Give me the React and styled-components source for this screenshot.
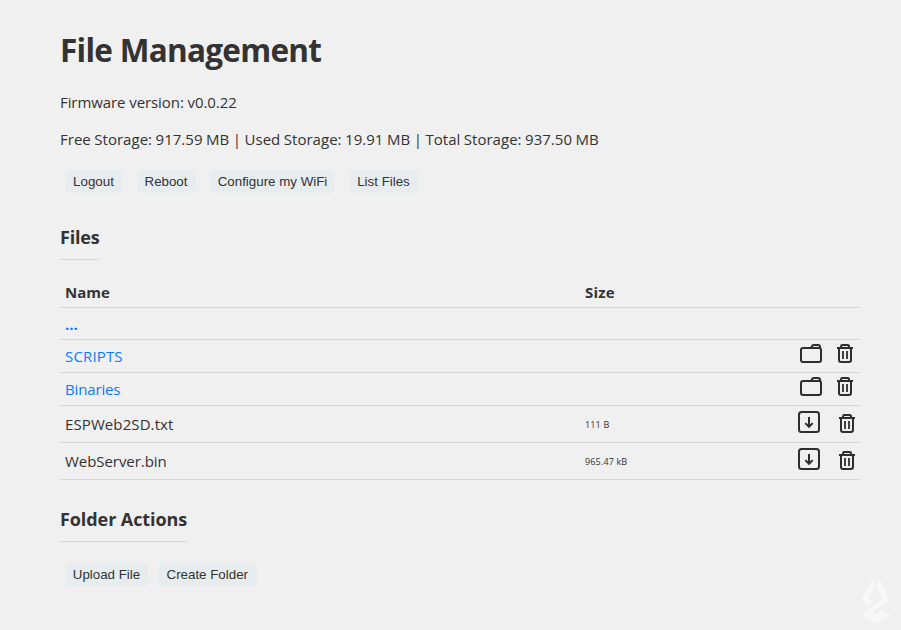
import React from "react";
import styled, { createGlobalStyle } from "styled-components";

const Global = createGlobalStyle`
  * { box-sizing: border-box; }
  body {
    margin: 0;
    background: #f0f0f0;
    color: #333;
    font-family: "Open Sans", "Noto Sans", sans-serif;
    font-size: 16px;
  }
`;

const Page = styled.main`
  position: relative;
  width: 901px;
  height: 630px;
  padding: 28px 41px 0 60px;
  overflow: hidden;
`;

const Title = styled.h1`
  margin: 0;
  font-size: 31.5px;
  line-height: 44px;
  font-weight: 700;
  white-space: nowrap;
  letter-spacing: -0.72px;
`;

const Info = styled.p`
  margin: ${(p) => p.$top} 0 0;
  font-size: 15px;
  line-height: 21px;
  white-space: nowrap;
  letter-spacing: ${(p) => p.$track || "0"};
  word-spacing: ${(p) => p.$words || "0"};
`;

const Toolbar = styled.div`
  display: flex;
  gap: ${(p) => p.$gap};
  margin-top: ${(p) => p.$top};
  padding-left: 5px;
`;

const Button = styled.button`
  width: ${(p) => p.$w}px;
  height: 23px;
  padding: 0;
  border: 0;
  border-radius: 4px;
  background: #e7ecef;
  color: #333;
  font: 13.333px/23px "Liberation Sans", Arial, sans-serif;
  white-space: nowrap;
`;

const Heading = styled.h3`
  width: ${(p) => p.$w}px;
  height: 36px;
  margin: ${(p) => p.$top} 0 0;
  border-bottom: 1px solid #d4d7d8;
  font-size: 18px;
  line-height: 26px;
  font-weight: 700;
  white-space: nowrap;
  letter-spacing: ${(p) => p.$track};
`;

const Table = styled.div`
  margin-top: 18px;
  width: 800px;
`;

const Row = styled.div`
  display: grid;
  grid-template-columns: 520px 213px 67px;
  height: ${(p) => p.$h}px;
  border-bottom: 1px solid #d4d7d8;
`;

const Cell = styled.div`
  padding: ${(p) => p.$top || "0"} 0 0 5px;
  font-size: 15px;
  line-height: 21px;
  white-space: nowrap;
  letter-spacing: ${(p) => p.$track || "0"};
`;

const HeadCell = styled(Cell)`
  font-weight: 700;
`;

const SizeCell = styled(Cell)`
  font-size: 9px;
  letter-spacing: 0.15px;
`;

const Link = styled.a`
  color: #087cff;
  text-decoration: none;
  font-weight: ${(p) => (p.$bold ? 700 : 400)};
`;

const Actions = styled.div`
  display: flex;
  align-items: flex-start;
  gap: ${(p) => p.$gap}px;
  padding: ${(p) => p.$top}px 0 0 ${(p) => p.$left}px;
`;

const Icon = styled.svg`
  display: block;
  flex: none;
  margin-top: ${(p) => p.$drop || 0}px;
  fill: none;
  stroke: #2e2e2e;
  stroke-width: 2;
`;

const Watermark = styled.svg`
  position: absolute;
  right: 10px;
  bottom: 6px;
  fill: #f8f8f8;
`;

const Folder = () => (
  <Icon width="22" height="19" viewBox="0 0 22 19">
    <rect x="1" y="4" width="20" height="14" rx="2" />
    <path d="M11.3 3.7C11.8 1.8 12.5 1 14 1H18.2C19.5 1 20.1 1.8 20.1 3.5V4.6" />
  </Icon>
);

const Trash = ({ drop }) => (
  <Icon width="16" height="19" viewBox="0 0 16 19" $drop={drop}>
    <path d="M0 4H16" />
    <path d="M4 4V2.4Q4 1 5.4 1H10.4Q12 1 12 2.4V4" />
    <path d="M2 4V16Q2 18 4 18H12Q14 18 14 16V4" />
    <path d="M6 7V15M10 7V15" strokeWidth="1.8" />
  </Icon>
);

const Download = () => (
  <Icon width="22" height="22" viewBox="0 0 22 22">
    <rect x="1" y="1" width="20" height="20" rx="2.5" />
    <path d="M11 6V16M7.3 12.1L11 15.8L14.7 12.1" />
  </Icon>
);

const entries = [
  { name: "SCRIPTS", h: 33, folder: true, track: "0.15px" },
  { name: "Binaries", h: 33, folder: true, track: "-0.15px" },
  { name: "ESPWeb2SD.txt", h: 37, size: "111 B", track: "0.1px" },
  { name: "WebServer.bin", h: 37, size: "965.47 kB", track: "-0.05px" },
];

export default function App() {
  return (
    <>
      <Global />
      <Page>
        <Title>File Management</Title>
        <Info $top="20px" $track="-0.08px">Firmware version: v0.0.22</Info>
        <Info $top="16px" $track="0.02px" $words="-0.4px">
          Free Storage: 917.59 MB | Used Storage: 19.91 MB | Total Storage: 937.50 MB
        </Info>
        <Toolbar $top="20px" $gap="14.5px">
          <Button $w={57}>Logout</Button>
          <Button $w={59}>Reboot</Button>
          <Button $w={125}>Configure my WiFi</Button>
          <Button $w={68}>List Files</Button>
        </Toolbar>
        <Heading $w={39} $top="31px" $track="-0.2px">Files</Heading>
        <Table>
          <Row $h={30}>
            <HeadCell $top="4px">Name</HeadCell>
            <HeadCell $top="4px" $track="0.2px">Size</HeadCell>
          </Row>
          <Row $h={32}>
            <Cell $top="6px"><Link $bold>...</Link></Cell>
          </Row>
          {entries.map((e) => (
            <Row key={e.name} $h={e.h}>
              <Cell $top={e.folder ? "6px" : "8px"} $track={e.track}>
                {e.folder ? <Link>{e.name}</Link> : e.name}
              </Cell>
              <SizeCell $top="8px">{e.size}</SizeCell>
              <Actions $top={e.folder ? 4 : 5} $left={e.folder ? 7 : 5} $gap={e.folder ? 15 : 19}>
                {e.folder ? <Folder /> : <Download />}
                <Trash drop={e.folder ? 0 : 3} />
              </Actions>
            </Row>
          ))}
        </Table>
        <Heading $w={127} $top="26px" $track="-0.08px">Folder Actions</Heading>
        <Toolbar $top="21px" $gap="10px">
          <Button $w={83}>Upload File</Button>
          <Button $w={98.5}>Create Folder</Button>
        </Toolbar>
        <Watermark width="30" height="47" viewBox="0 0 30 47">
          <path d="M12.5 0L0.5 22.500L7.500 28.500L12.500 25L8 21L12.500 11Z" />
          <path d="M16.500 0L29 23L12 34.500L15 37L22 33.500L28.500 38.500L15 46.500L0.500 38L21.500 22L16.500 11Z" />
        </Watermark>
      </Page>
    </>
  );
}
